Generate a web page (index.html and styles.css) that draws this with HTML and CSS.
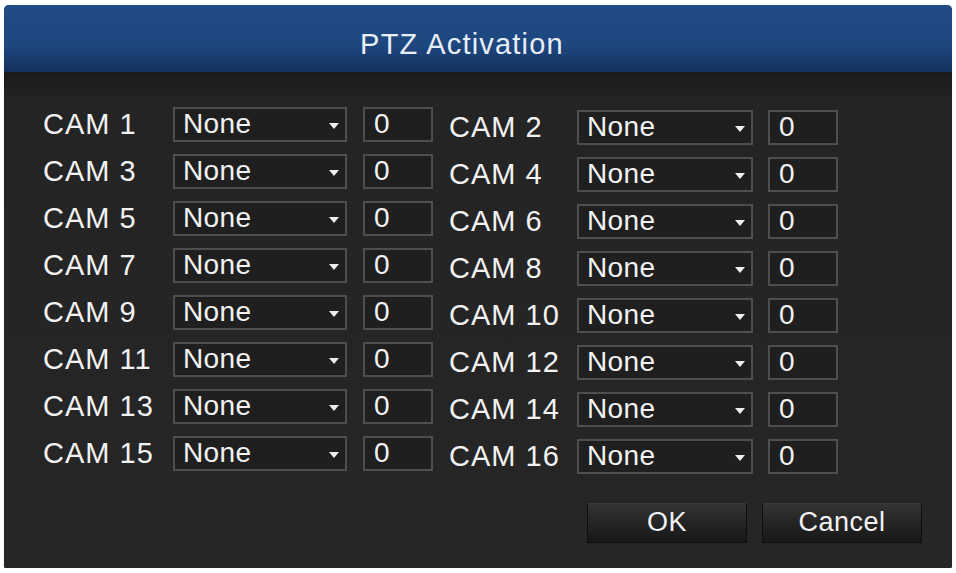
FILE: index.html
```
<!DOCTYPE html>
<html lang="en">
<head>
    <meta charset="UTF-8">
    <title>PTZ Activation</title>
    <link rel="stylesheet" href="styles.css">
</head>

<body>
    <div class="dialog">
        <div class="dialog-head">
            <h2>PTZ Activation</h2>
        </div>
        <div class="dialog-body">
            <div class="cams">
                <ul class="col">
                    <li><span class="cam">CAM 1</span><div class="sel">None<i></i></div><div class="num">0</div></li>
                    <li><span class="cam">CAM 3</span><div class="sel">None<i></i></div><div class="num">0</div></li>
                    <li><span class="cam">CAM 5</span><div class="sel">None<i></i></div><div class="num">0</div></li>
                    <li><span class="cam">CAM 7</span><div class="sel">None<i></i></div><div class="num">0</div></li>
                    <li><span class="cam">CAM 9</span><div class="sel">None<i></i></div><div class="num">0</div></li>
                    <li><span class="cam">CAM 11</span><div class="sel">None<i></i></div><div class="num">0</div></li>
                    <li><span class="cam">CAM 13</span><div class="sel">None<i></i></div><div class="num">0</div></li>
                    <li><span class="cam">CAM 15</span><div class="sel">None<i></i></div><div class="num">0</div></li>
                </ul>
                <ul class="col col-right">
                    <li><span class="cam">CAM 2</span><div class="sel">None<i></i></div><div class="num">0</div></li>
                    <li><span class="cam">CAM 4</span><div class="sel">None<i></i></div><div class="num">0</div></li>
                    <li><span class="cam">CAM 6</span><div class="sel">None<i></i></div><div class="num">0</div></li>
                    <li><span class="cam">CAM 8</span><div class="sel">None<i></i></div><div class="num">0</div></li>
                    <li><span class="cam">CAM 10</span><div class="sel">None<i></i></div><div class="num">0</div></li>
                    <li><span class="cam">CAM 12</span><div class="sel">None<i></i></div><div class="num">0</div></li>
                    <li><span class="cam">CAM 14</span><div class="sel">None<i></i></div><div class="num">0</div></li>
                    <li><span class="cam">CAM 16</span><div class="sel">None<i></i></div><div class="num">0</div></li>
                </ul>
            </div>
            <div class="btns">
                <a class="btn" href="#">OK</a>
                <a class="btn" href="#">Cancel</a>
            </div>
        </div>
    </div>
</body>

</html>
```

FILE: styles.css
```
ul,
li,
h2 {
    margin: 0;
    padding: 0;
}

ul {
    list-style: none;
}

html {
    background: #fff;
}

body {
    margin: 0;
    font-family: "Liberation Sans", Arial, sans-serif;
    color: #f2f2f2;
}

.dialog {
    margin: 5px 4px 0 4px;
    width: 948px;
    height: 563px;
    border-radius: 5px 5px 2px 2px;
    overflow: hidden;
    background: #252525;
    box-shadow: 0 2px 1px #c4c4c4;
    display: flex;
    flex-direction: column;
}

.dialog-head {
    height: 67px;
    flex: none;
    background: linear-gradient(#204b84 0%, #1d477f 60%, #18396a 85%, #15315c 100%);
}

.dialog-head h2 {
    font-size: 29px;
    font-weight: normal;
    letter-spacing: 1.2px;
    text-align: center;
    padding: 24px 32px 0 0;
    line-height: 30px;
    color: #e9eef6;
}

.dialog-body {
    flex: 1;
    padding: 35px 30px 0 39px;
    background: linear-gradient(#1a1a1a 0, #242424 30px, #262626 100%);
}

.cams {
    display: flex;
}

.col {
    display: flex;
    flex-direction: column;
    gap: 12px;
}

.col-right {
    margin: 3px 0 0 16px;
}

.col li {
    display: flex;
    align-items: center;
    height: 35px;
    font-size: 28px;
    letter-spacing: 0.4px;
}

.cam {
    width: 130px;
    white-space: nowrap;
    font-size: 29px;
    letter-spacing: 1px;
}

.col-right .cam {
    width: 128px;
}

.sel,
.num {
    position: relative;
    box-sizing: border-box;
    height: 35px;
    border: 2px solid #4e4e4e;
    background: #1f1f1f;
    line-height: 29px;
    padding-left: 8px;
}

.sel {
    width: 174px;
}

.col-right .sel {
    width: 176px;
}

.num {
    width: 70px;
    margin-left: 16px;
    padding-left: 9px;
}

.col-right .num {
    margin-left: 15px;
}

.sel i {
    position: absolute;
    right: 6px;
    top: 14px;
    width: 0;
    height: 0;
    border-left: 5px solid transparent;
    border-right: 5px solid transparent;
    border-top: 6px solid #eee;
}

.btns {
    display: flex;
    justify-content: flex-end;
    gap: 15px;
    margin-top: 29px;
}

.btn {
    display: block;
    width: 160px;
    height: 40px;
    box-sizing: border-box;
    border: 1px solid #0e0e0e;
    border-top-color: #3a3a3a;
    background: linear-gradient(#333 0%, #262626 45%, #171717 100%);
    color: #f2f2f2;
    text-decoration: none;
    text-align: center;
    font-size: 27px;
    line-height: 37px;
    letter-spacing: 0.5px;
}
```
